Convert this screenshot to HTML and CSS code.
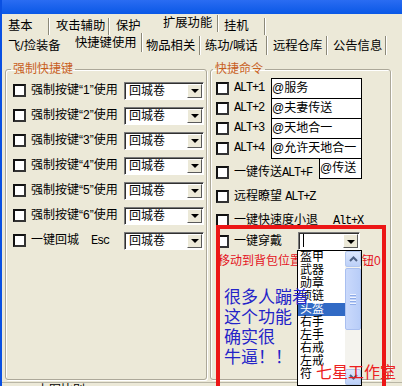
FILE: index.html
```html
<!DOCTYPE html>
<html lang="zh-CN">
<head>
<meta charset="UTF-8">
<link rel="stylesheet" href="styles.css">
</head>
<body>
<div class="window">
  <div class="titlebar"></div>

  <div class="tabs tabs-top">
    <div class="tab">基本</div>
    <div class="tab">攻击辅助</div>
    <div class="tab tab-flat">保护</div>
    <div class="tab tab-on">扩展功能</div>
    <div class="tab">挂机</div>
  </div>
  <div class="tabs tabs-sub">
    <div class="tab tab-flat">飞/捡装备</div>
    <div class="tab tab-on">快捷键使用</div>
    <div class="tab">物品相关</div>
    <div class="tab">练功/喊话</div>
    <div class="tab">远程仓库</div>
    <div class="tab">公告信息</div>
  </div>

  <div class="page">
    <fieldset class="group group-keys">
      <legend>强制快捷键</legend>
      <div class="row">
        <span class="check"></span>
        <span class="label">强制按键“1”使用</span>
        <div class="combo"><span class="combo-text">回城卷</span><span class="combo-btn"><i class="arrow"></i></span></div>
      </div>
      <div class="row">
        <span class="check"></span>
        <span class="label">强制按键“2”使用</span>
        <div class="combo"><span class="combo-text">回城卷</span><span class="combo-btn"><i class="arrow"></i></span></div>
      </div>
      <div class="row">
        <span class="check"></span>
        <span class="label">强制按键“3”使用</span>
        <div class="combo"><span class="combo-text">回城卷</span><span class="combo-btn"><i class="arrow"></i></span></div>
      </div>
      <div class="row">
        <span class="check"></span>
        <span class="label">强制按键“4”使用</span>
        <div class="combo"><span class="combo-text">回城卷</span><span class="combo-btn"><i class="arrow"></i></span></div>
      </div>
      <div class="row">
        <span class="check"></span>
        <span class="label">强制按键“5”使用</span>
        <div class="combo"><span class="combo-text">回城卷</span><span class="combo-btn"><i class="arrow"></i></span></div>
      </div>
      <div class="row">
        <span class="check"></span>
        <span class="label">强制按键“6”使用</span>
        <div class="combo"><span class="combo-text">回城卷</span><span class="combo-btn"><i class="arrow"></i></span></div>
      </div>
      <div class="row">
        <span class="check"></span>
        <span class="label">一键回城<span class="mono key-esc">Esc</span></span>
        <div class="combo"><span class="combo-text">回城卷</span><span class="combo-btn"><i class="arrow"></i></span></div>
      </div>
    </fieldset>

    <fieldset class="group group-cmds">
      <legend>快捷命令</legend>
      <div class="alt-row">
        <span class="check"></span>
        <span class="mono alt-label">ALT+1</span>
        <span class="cmd-box">@服务</span>
      </div>
      <div class="alt-row">
        <span class="check"></span>
        <span class="mono alt-label">ALT+2</span>
        <span class="cmd-box">@夫妻传送</span>
      </div>
      <div class="alt-row">
        <span class="check"></span>
        <span class="mono alt-label">ALT+3</span>
        <span class="cmd-box">@天地合一</span>
      </div>
      <div class="alt-row">
        <span class="check"></span>
        <span class="mono alt-label">ALT+4</span>
        <span class="cmd-box">@允许天地合一</span>
      </div>
      <div class="alt-row alt-row-send">
        <span class="check"></span>
        <span class="send-label">一键传送<span class="mono">ALT+F</span></span>
        <span class="cmd-box cmd-short">@传送</span>
      </div>
      <div class="opt-row opt-first">
        <span class="check"></span>
        <span>远程瞭望 <span class="mono">ALT+Z</span></span>
      </div>
      <div class="opt-row">
        <span class="check"></span>
        <span>一键快速度小退<span class="mono key-x">Alt+X</span></span>
      </div>
      <div class="wear-row">
        <span class="check"></span>
        <span class="wear-label">一键穿戴</span>
        <div class="combo combo-wear">
          <span class="combo-text"><span class="caret"></span></span>
          <span class="combo-btn"><i class="arrow"></i></span>
          <div class="droplist">
            <ul class="items">
              <li>盔甲</li>
              <li>武器</li>
              <li>勋章</li>
              <li>项链</li>
              <li class="sel">头盔</li>
              <li>右手</li>
              <li>左手</li>
              <li>右戒</li>
              <li>左戒</li>
              <li>符</li>
            </ul>
            <div class="vscroll">
              <span class="sb-btn"><svg width="9" height="6" viewBox="0 0 9 6"><polyline points="1,5 4.5,1.5 8,5" fill="none" stroke="#4d6185" stroke-width="2"/></svg></span>
              <span class="sb-thumb"><i></i><i></i><i></i><i></i></span>
              <span class="sb-track"></span>
              <span class="sb-btn"><svg width="9" height="6" viewBox="0 0 9 6"><polyline points="1,1 4.5,4.5 8,1" fill="none" stroke="#4d6185" stroke-width="2"/></svg></span>
            </div>
          </div>
        </div>
      </div>
      <div class="hint">移动到背包位置后的装备按钮0</div>
    </fieldset>
  </div>

  <div class="status">上图比别</div>

  <div class="mark-box"></div>
  <div class="note">很多人蹦着<br>这个功能<br>确实很<br>牛逼！！</div>
  <div class="studio">七星工作室</div>
</div>
</body>
</html>
```

FILE: styles.css
```css
html, body { margin: 0; padding: 0; }
body {
  width: 402px; height: 386px; overflow: hidden;
  background: #ece9d8; color: #000;
  font: 12px/1.2 "Liberation Sans", "Noto Sans CJK SC", sans-serif;
}
.window {
  position: relative; height: 386px;
  border-left: 2px solid #0a50e2;
}
.titlebar { height: 14px; background: linear-gradient(#2a6cf2, #0a58e6); }

/* tab strips */
.tabs { display: flex; font-size: 12.3px; }
.tabs-top { height: 21px; padding-top: 4px; box-sizing: border-box; }
.tabs-sub { height: 20px; padding-top: 1px; box-sizing: border-box; }
.tab {
  box-sizing: border-box; height: 100%;
  padding-left: 6px; line-height: 17px; white-space: nowrap;
  border-right: 1px solid #8b8878; box-shadow: 1px 0 0 #fff;
}
.tabs-sub .tab { line-height: 19px; padding-top: 1px; }
.tab-flat { border-right: none; box-shadow: none; }
.tab-on { position: relative; top: -3px; }
.tabs-top .tab:nth-child(1) { width: 47px; }
.tabs-top .tab:nth-child(2) { width: 60px; padding-left: 7px; }
.tabs-top .tab:nth-child(3) { width: 47px; padding-left: 7px; }
.tabs-top .tab:nth-child(4) { width: 62px; padding-left: 7px; }
.tabs-top .tab:nth-child(5) { width: 47px; }
.tabs-sub .tab:nth-child(1) { width: 66px; }
.tabs-sub .tab:nth-child(2) { width: 74px; padding-left: 7px; }
.tabs-sub .tab:nth-child(3) { width: 58px; padding-left: 4px; }
.tabs-sub .tab:nth-child(4) { width: 67px; padding-left: 5px; }
.tabs-sub .tab:nth-child(5) { width: 60px; }
.tabs-sub .tab:nth-child(6) { width: 59px; }

/* page with the two group boxes */
.page {
  display: flex; gap: 3px; box-sizing: border-box;
  height: 328px; padding: 7px 0 0 3px;
  border-bottom: 1px solid #b9b6a6;
}
.group {
  margin: 0; min-width: 0; box-sizing: border-box; height: 318px;
  border: 1px solid #aca899; border-radius: 3px;
  box-shadow: inset 1px 1px 0 #fff, 1px 1px 0 #fff;
}
.group legend {
  padding: 0 2px; line-height: 15px; font-size: 12px; color: #c8601e;
}
.group-keys { width: 202px; padding: 1px 0 0 7px; }
.group-keys legend { margin-left: -2px; }
.group-cmds { width: 181px; padding: 1px 0 0 5px; }
.group-cmds legend { margin-left: -3px; }

.check {
  flex: none; display: inline-block; box-sizing: border-box;
  width: 13px; height: 13px; background: #fff;
  border: 2px solid #111; border-right-color: #333; border-bottom-color: #333;
}
.mono { font: 12px/1 "Liberation Mono", monospace; letter-spacing: -1.2px; }

.row { display: flex; align-items: center; height: 25px; }
.row .label { width: 93px; margin-left: 5px; white-space: nowrap; overflow: hidden; }
.key-esc { margin-left: 12px; }

.combo {
  position: relative; display: flex; box-sizing: border-box;
  width: 80px; height: 18px; background: #fff;
  border: 1px solid; border-color: #7a7a7a #fff #fff #7a7a7a;
  box-shadow: inset 1px 1px 0 #303030;
}
.combo-text { flex: 1; padding: 1px 0 0 4px; line-height: 15px; }
.combo-btn {
  width: 15px; margin: 1px 1px 1px 0; display: flex;
  align-items: center; justify-content: center; background: #ece9d8;
  border: 1px solid; border-color: #fff #5a5a5a #5a5a5a #fff; box-sizing: border-box;
}
.arrow {
  width: 0; height: 0; margin-top: 1px;
  border-left: 4px solid transparent; border-right: 4px solid transparent;
  border-top: 4px solid #000;
}

/* command boxes on the right */
.alt-row { display: flex; align-items: center; height: 20px; }
.alt-label { width: 37px; margin-left: 5px; }
.cmd-box {
  box-sizing: border-box; width: 91px; height: 21px; margin-bottom: -1px;
  border: 1px solid #000; background: #fff; line-height: 19px; white-space: nowrap;
}
.alt-row-send { align-items: flex-end; height: 21px; }
.send-label { width: 85px; margin-left: 5px; line-height: 12px; white-space: nowrap; }
.cmd-short { width: 43px; height: 21px; margin-bottom: 0; }

.opt-row { display: flex; align-items: center; height: 24px; white-space: nowrap; }
.opt-row > span + span { margin-left: 5px; }
.opt-first { margin-top: 5px; }
.key-x { margin-left: 15px; }

.wear-row { display: flex; align-items: center; height: 18px; }
.wear-label { width: 64px; margin-left: 5px; }
.combo-wear { width: 62px; }
.caret { display: inline-block; width: 1px; height: 13px; background: #000; vertical-align: -2px; }

.droplist {
  position: absolute; left: -2px; top: 17px; z-index: 2;
  display: flex; width: 65px; height: 136px; box-sizing: border-box;
  background: #fff; border: 1px solid #000;
}
.items { list-style: none; margin: 0; padding: 0; flex: 1; }
.items li { height: 13px; line-height: 13px; padding-left: 2px; white-space: nowrap; }
.items li.sel { background: #316ac5; color: #fff; }
.vscroll { width: 16px; display: flex; flex-direction: column; background: #f4f3ee; }
.sb-btn {
  height: 16px; box-sizing: border-box; display: flex; align-items: center; justify-content: center;
  background: linear-gradient(#dce7fd, #bcd0f8); border: 1px solid #b3c7ef; border-radius: 2px;
}
.sb-thumb {
  height: 62px; margin-top: 1px; box-sizing: border-box; display: flex; flex-direction: column;
  align-items: center; justify-content: center; gap: 1px;
  background: linear-gradient(90deg, #cad9fb, #b8cdf8); border: 1px solid #a9bff0; border-radius: 2px;
}
.sb-thumb i { width: 6px; height: 1px; background: #eef3fe; border-bottom: 1px solid #8eabe8; }
.sb-track { flex: 1; }

.hint {
  margin-top: 4px; padding-left: 2px; line-height: 14px;
  color: #e4141e; white-space: nowrap;
}

.status { padding: 1px 0 0 35px; line-height: 12px; }

/* hand-drawn notes over the screenshot */
.mark-box {
  position: absolute; left: 214px; top: 225px; z-index: 3;
  width: 162px; height: 170px; border: 4px solid #ec1616;
}
.note {
  position: absolute; left: 222px; top: 288px; z-index: 3;
  font-size: 17px; line-height: 20px; color: #2424c8;
}
.studio {
  position: absolute; left: 314px; top: 364px; z-index: 3;
  font-size: 16px; line-height: 18px; color: #ec2020;
}
```
